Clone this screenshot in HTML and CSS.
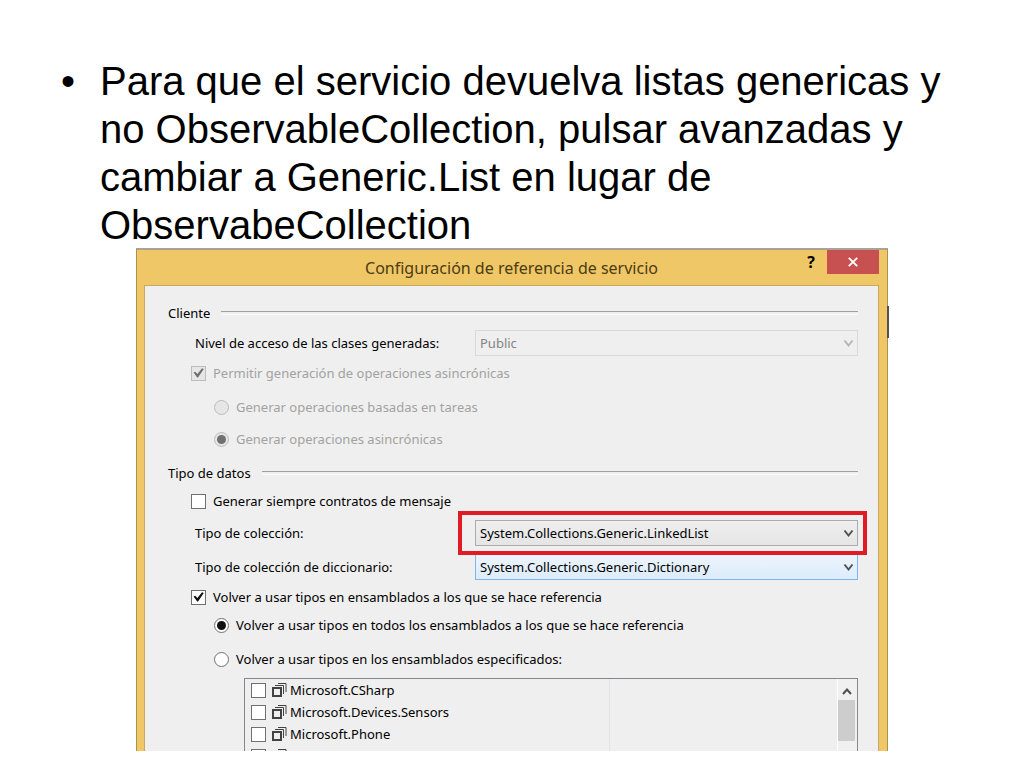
FILE: index.html
```html
<!DOCTYPE html>
<html lang="es">
<head>
<meta charset="utf-8">
<title>Configuración de referencia de servicio</title>
<link rel="stylesheet" href="styles.css">
</head>
<body>
<main class="slide">
  <ul class="points">
    <li>Para que el servicio devuelva listas genericas y no ObservableCollection, pulsar avanzadas y cambiar a Generic.List en lugar de ObservabeCollection</li>
  </ul>

  <section class="dialog" aria-labelledby="dialog-title">
    <header class="titlebar">
      <h1 id="dialog-title">Configuración de referencia de servicio</h1>
      <div class="window-buttons">
        <button class="help" type="button" aria-label="Ayuda">?</button>
        <button class="close" type="button" aria-label="Cerrar">
          <svg width="12" height="12" viewBox="0 0 12 12" aria-hidden="true"><path d="M1.8 1.8l8.4 8.4M10.2 1.8L1.8 10.2" stroke="#fff" stroke-width="1.9"/></svg>
        </button>
      </div>
    </header>

    <form class="panel">
      <h2 class="group">Cliente</h2>
      <div class="field gap-s">
        <label for="access">Nivel de acceso de las clases generadas:</label>
        <div class="combo">
          <select id="access" disabled><option>Public</option></select>
          <svg class="chevron" width="11" height="9" viewBox="0 0 11 9" aria-hidden="true"><path d="M1.5 1.5l4 5 4-5"/></svg>
        </div>
      </div>
      <label class="option gap-s"><input type="checkbox" checked disabled>Permitir generación de operaciones asincrónicas</label>
      <label class="option nested gap-l"><input type="radio" name="async" disabled>Generar operaciones basadas en tareas</label>
      <label class="option nested gap-m"><input type="radio" name="async" checked disabled>Generar operaciones asincrónicas</label>

      <h2 class="group gap-l">Tipo de datos</h2>
      <label class="option gap-n"><input type="checkbox">Generar siempre contratos de mensaje</label>
      <div class="field gap-n">
        <label for="collection">Tipo de colección:</label>
        <div class="combo marked">
          <select id="collection"><option>System.Collections.Generic.LinkedList</option></select>
          <svg class="chevron" width="11" height="9" viewBox="0 0 11 9" aria-hidden="true"><path d="M1.5 1.5l4 5 4-5"/></svg>
        </div>
      </div>
      <div class="field gap-s">
        <label for="dictionary">Tipo de colección de diccionario:</label>
        <div class="combo hot">
          <select id="dictionary"><option>System.Collections.Generic.Dictionary</option></select>
          <svg class="chevron" width="11" height="9" viewBox="0 0 11 9" aria-hidden="true"><path d="M1.5 1.5l4 5 4-5"/></svg>
        </div>
      </div>
      <label class="option gap-s"><input type="checkbox" checked>Volver a usar tipos en ensamblados a los que se hace referencia</label>
      <label class="option nested gap-n"><input type="radio" name="reuse" checked>Volver a usar tipos en todos los ensamblados a los que se hace referencia</label>
      <label class="option nested gap-l"><input type="radio" name="reuse">Volver a usar tipos en los ensamblados especificados:</label>

      <div class="assemblies gap-n">
        <div class="names">
          <label><input type="checkbox"><svg width="16" height="16" viewBox="0 0 16 16" aria-hidden="true"><path class="thick" d="M2 6h8v8H2z"/><path d="M4 3.5h8.500V12M7 1.500h8V10"/></svg>Microsoft.CSharp</label>
          <label><input type="checkbox"><svg width="16" height="16" viewBox="0 0 16 16" aria-hidden="true"><path class="thick" d="M2 6h8v8H2z"/><path d="M4 3.5h8.500V12M7 1.500h8V10"/></svg>Microsoft.Devices.Sensors</label>
          <label><input type="checkbox"><svg width="16" height="16" viewBox="0 0 16 16" aria-hidden="true"><path class="thick" d="M2 6h8v8H2z"/><path d="M4 3.5h8.500V12M7 1.500h8V10"/></svg>Microsoft.Phone</label>
          <label><input type="checkbox" aria-label="Ensamblado"><svg width="16" height="16" viewBox="0 0 16 16" aria-hidden="true"><path class="thick" d="M2 6h8v8H2z"/><path d="M4 3.5h8.500V12M7 1.500h8V10"/></svg></label>
        </div>
        <div class="details"></div>
        <div class="scrollbar">
          <button type="button" aria-label="Subir"><svg width="10" height="8" viewBox="0 0 10 8" aria-hidden="true"><path d="M1 7l4-4.500L9 7"/></svg></button>
          <div class="thumb"></div>
        </div>
      </div>
    </form>
  </section>
</main>
</body>
</html>
```
FILE: styles.css
```css
* {
  box-sizing: border-box;
}

body {
  margin: 0;
  background: #fff;
  color: #000;
}

.slide {
  padding: 57px 56px 16px;
}

.points {
  margin: 0;
  padding: 0 0 0 44px;
  font: 40px/48px "Liberation Sans", Arial, sans-serif;
  list-style: none;
}

.points li::before {
  content: "•";
  float: left;
  margin-left: -39px;
}

.dialog {
  position: relative;
  margin: -1px 80px 0;
  padding: 0 8px 0 7px;
  border: 1px solid #a8924f;
  border-top: 2px solid #aaa295;
  border-bottom: 0;
  background: #f0c767;
  font: 13px/18px "Noto Sans", "Open Sans", sans-serif;
}

/* Edge of the window lying behind the dialog */
.dialog::after {
  content: "";
  position: absolute;
  top: 56px;
  right: -2px;
  width: 2px;
  height: 32px;
  background: #55505a;
}

.titlebar {
  display: grid;
  grid-template-columns: 1fr;
  height: 35px;
}

.titlebar > * {
  grid-area: 1 / 1;
}

.titlebar h1 {
  margin: 0;
  color: #4b3c12;
  font-size: 16px;
  font-weight: 400;
  line-height: 36px;
  text-align: center;
}

.window-buttons {
  display: flex;
  justify-self: end;
  height: 24px;
}

.window-buttons button {
  display: grid;
  place-items: center;
  padding: 0;
  border: 0;
  background: none;
}

.window-buttons .help {
  width: 32px;
  font: bold 16px/24px "Open Sans", sans-serif;
}

.window-buttons .close {
  width: 52px;
  background: #c75050;
}

.panel {
  display: flex;
  flex-direction: column;
  padding: 18px 20px 0 23px;
  border: 1px solid #c9a866;
  border-bottom: 0;
  background: #efefef;
}

.gap-s { margin-top: 8px; }
.gap-n { margin-top: 10px; }
.gap-m { margin-top: 14px; }
.gap-l { margin-top: 16px; }

.group {
  display: flex;
  align-items: center;
  gap: 11px;
  margin-bottom: 0;
  font-size: 13px;
  font-weight: 400;
}

.group:first-child {
  margin-top: 0;
}

.group::after {
  content: "";
  flex: 1;
  height: 2px;
  border-top: 1px solid #a0a0a0;
  border-bottom: 1px solid #fafafa;
}

.field {
  display: flex;
  align-items: center;
  padding-left: 27px;
}

.field label {
  flex: 0 0 280px;
}

.combo {
  position: relative;
  flex: 1;
}

.combo select {
  display: block;
  appearance: none;
  width: 100%;
  height: 26px;
  padding: 0 24px 0 4px;
  border: 1px solid #acacac;
  border-radius: 0;
  background: linear-gradient(#efefef, #e5e5e5);
  color: #000;
  font: inherit;
}

.combo select:disabled {
  border-color: #d9d9d9;
  background: #efefef;
  color: #838383;
  opacity: 1;
}

.combo.hot select {
  border-color: #7eb4ea;
  background: linear-gradient(#ecf4fc, #dcecfc);
}

.chevron {
  position: absolute;
  top: 9px;
  right: 4px;
  fill: none;
  stroke: #505050;
  stroke-width: 2;
  pointer-events: none;
}

select:disabled + .chevron {
  stroke: #b5b5b5;
}

.marked {
  z-index: 1;
}

.marked::after {
  content: "";
  position: absolute;
  inset: -9px -9px -9px -17px;
  border: 4px solid #e01b24;
  pointer-events: none;
}

.option {
  display: flex;
  align-items: center;
  gap: 7px;
  padding-left: 23px;
}

.option.nested {
  padding-left: 46px;
}

.option:has(input:disabled) {
  color: #a2a2a2;
}

input {
  display: grid;
  place-items: center;
  flex: none;
  appearance: none;
  width: 15px;
  height: 15px;
  margin: 0;
  border: 1px solid #707070;
  background: #fff;
  color: #111;
}

input[type="radio"] {
  border-radius: 50%;
}

input:disabled {
  border-color: #bcbcbc;
  background: #e6e6e6;
  color: #707070;
}

input:checked::before {
  content: "";
  width: 11px;
  height: 11px;
  background: currentColor;
  clip-path: polygon(5% 46%, 20% 38%, 40% 60%, 82% 6%, 98% 14%, 46% 92%, 38% 92%);
}

input[type="radio"]:checked::before {
  width: 9px;
  height: 9px;
  border-radius: 50%;
  clip-path: none;
}

.assemblies {
  display: grid;
  grid-template-columns: 364px 1fr 20px;
  height: 73px;
  margin-left: 76px;
  overflow: hidden;
  border: solid #828790;
  border-width: 1px 1px 0;
}

.names {
  padding-left: 6px;
}

.names label {
  display: flex;
  align-items: center;
  height: 22px;
}

.names svg {
  margin: 0 3px 0 5px;
  fill: none;
  stroke: #424242;
  stroke-width: 1;
}

.names .thick {
  stroke-width: 2;
}

.details {
  border-left: 1px solid #e0e4ea;
}

.scrollbar {
  padding-right: 2px;
  border-left: 1px solid #fff;
  background: #f0f0f0;
}

.scrollbar button {
  display: grid;
  place-items: center;
  width: 100%;
  height: 21px;
  padding: 3px 0 0;
  border: 0;
  background: none;
}

.scrollbar path {
  fill: none;
  stroke: #505050;
  stroke-width: 2;
}

.thumb {
  height: 41px;
  background: #cdcdcd;
}
```
